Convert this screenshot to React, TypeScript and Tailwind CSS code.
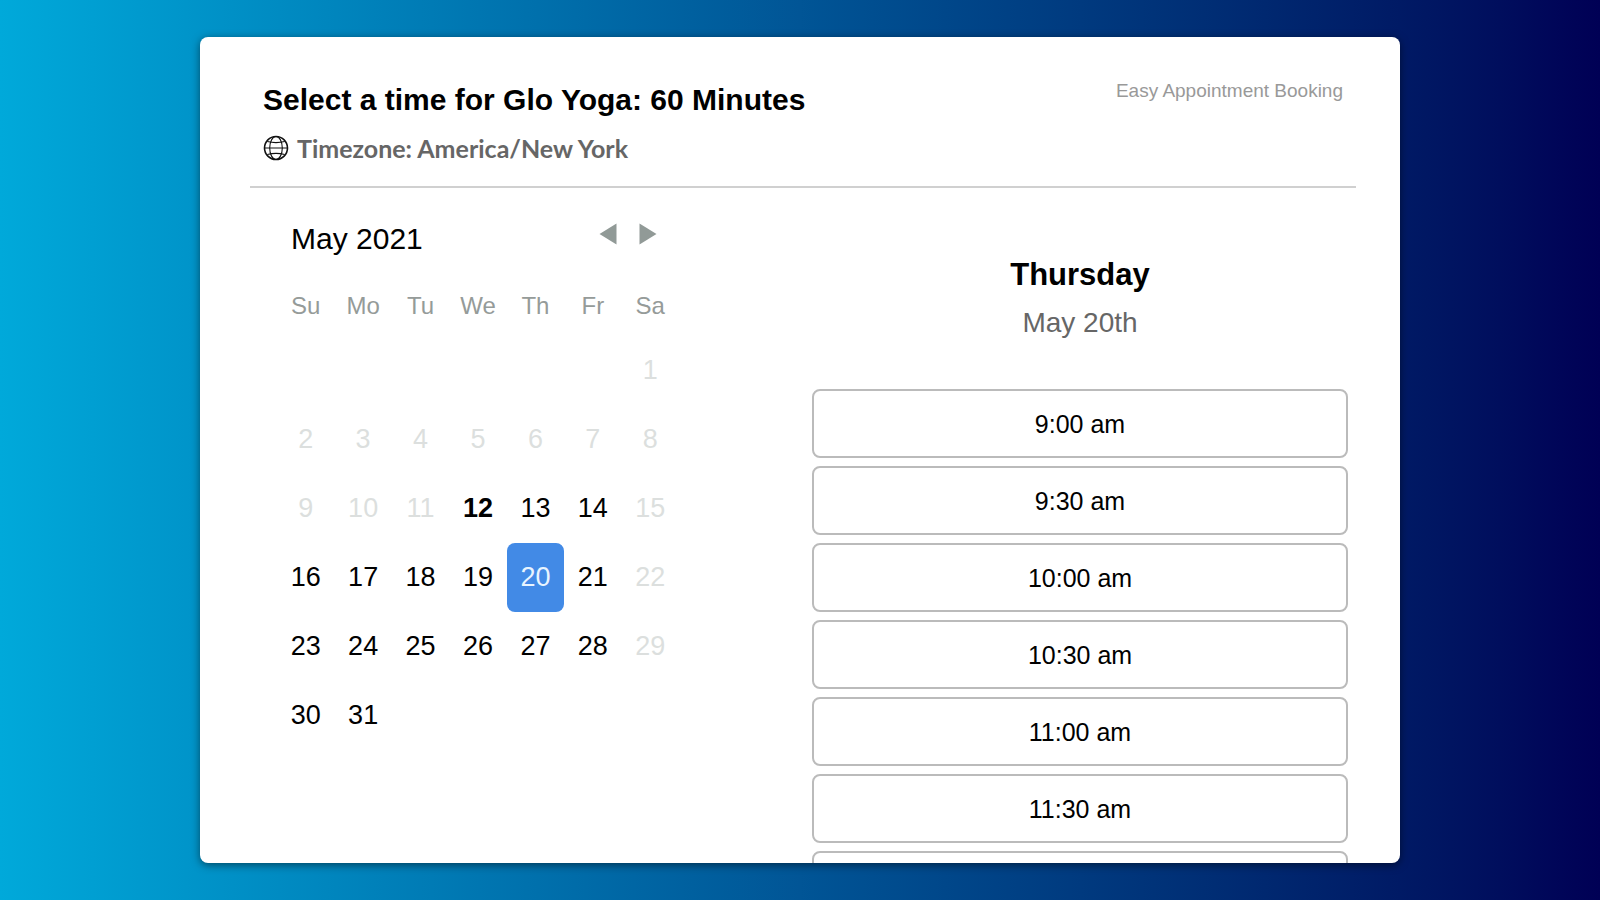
import { useState } from "react"

const weekdays = ["Su", "Mo", "Tu", "We", "Th", "Fr", "Sa"]

// May 2021 starts on a Saturday
const weeks: (number | null)[][] = [
  [null, null, null, null, null, null, 1],
  [2, 3, 4, 5, 6, 7, 8],
  [9, 10, 11, 12, 13, 14, 15],
  [16, 17, 18, 19, 20, 21, 22],
  [23, 24, 25, 26, 27, 28, 29],
  [30, 31, null, null, null, null, null],
]

const today = 12
const slots = ["9:00 am", "9:30 am", "10:00 am", "10:30 am", "11:00 am", "11:30 am", ""]

const isAvailable = (day: number, column: number) => day >= today && column !== 6

function GlobeIcon() {
  return (
    <svg width="26" height="26" viewBox="0 0 26 26" fill="none" stroke="#111" aria-hidden="true">
      <circle cx="13" cy="13" r="11.5" strokeWidth="1.6" />
      <ellipse cx="13" cy="13" rx="6.3" ry="11.5" strokeWidth="1.1" />
      <path d="M1.5 13h23M4.3 6.5c5 1.3 12.4 1.3 17.4 0M4.3 19.5c5-1.3 12.4-1.3 17.4 0" strokeWidth="1.1" />
    </svg>
  )
}

function Header() {
  return (
    <header className="mr-[44px] ml-[50px] flex h-[151px] items-start justify-between border-b-2 border-[#d0d0d0] px-[13px]">
      <div>
        <h1 className="mt-[45px] text-[30px] leading-9 font-bold">Select a time for Glo Yoga: 60 Minutes</h1>
        <p className="mt-3 flex items-center gap-2 font-[Lato] text-[25px] leading-9 font-bold text-[#666]">
          <GlobeIcon />
          Timezone: America/New York
        </p>
      </div>
      <p className="mt-[42px] text-[19px] leading-6 text-[#999]">Easy Appointment Booking</p>
    </header>
  )
}

interface CalendarProps {
  selected: number
  onSelect: (day: number) => void
}

function Calendar({ selected, onSelect }: CalendarProps) {
  return (
    <section className="w-[402px] pt-8">
      <div className="flex items-start justify-between pr-[22px] pl-[14px]">
        <h2 className="text-[30px] leading-[38px]">May 2021</h2>
        <div className="flex gap-[22px] pt-[3px]">
          <button aria-label="Previous month">
            <svg width="18" height="22" viewBox="0 0 18 22" fill="#919a97">
              <path d="M0.5 11 17.5 0.5v21z" />
            </svg>
          </button>
          <button aria-label="Next month">
            <svg width="18" height="22" viewBox="0 0 18 22" fill="#919a97">
              <path d="M17.5 11 0.5 0.5v21z" />
            </svg>
          </button>
        </div>
      </div>
      <table className="mt-8 w-full table-fixed border-collapse text-center">
        <thead>
          <tr>
            {weekdays.map((name) => (
              <th key={name} scope="col" className="h-[46px] p-0 align-top text-[24px] leading-8 font-normal text-[#959b99]">
                {name}
              </th>
            ))}
          </tr>
        </thead>
        <tbody>
          {weeks.map((week, row) => (
            <tr key={row}>
              {week.map((day, column) => (
                <td key={column} className="h-[69px] p-0">
                  {day && (
                    <button
                      disabled={!isAvailable(day, column)}
                      onClick={() => onSelect(day)}
                      className={`h-[69px] w-full rounded-lg text-[27px] disabled:text-[#dcdfde] ${
                        day === selected ? "bg-[#428ae6] text-[#e8f4ff]" : ""
                      } ${day === today ? "font-bold" : ""}`}
                    >
                      {day}
                    </button>
                  )}
                </td>
              ))}
            </tr>
          ))}
        </tbody>
      </table>
    </section>
  )
}

function TimeSlots() {
  return (
    <section className="w-[536px] text-center">
      <h2 className="pt-[67px] text-[31px] leading-10 font-bold">Thursday</h2>
      <p className="mt-2 text-[28px] leading-10 text-[#666]">May 20th</p>
      <ul className="mt-[46px] flex flex-col gap-2">
        {slots.map((time, index) => (
          <li key={index}>
            <button className="block h-[69px] w-full rounded-lg border-2 border-[#bbb] pt-[2px] text-[25px]">{time}</button>
          </li>
        ))}
      </ul>
    </section>
  )
}

export default function App() {
  const [selected, setSelected] = useState(20)

  return (
    <div className="h-screen bg-linear-to-r from-[#00a9da] via-[#015596] to-[#000055] px-[200px] py-[37px] font-['Liberation_Sans',Arial,sans-serif] text-black">
      <main className="h-full overflow-hidden rounded-lg bg-white shadow-[0_2px_8px_rgba(0,0,0,0.5)]">
        <Header />
        <div className="flex justify-between pr-[52px] pl-[77px]">
          <Calendar selected={selected} onSelect={setSelected} />
          <TimeSlots />
        </div>
      </main>
    </div>
  )
}
